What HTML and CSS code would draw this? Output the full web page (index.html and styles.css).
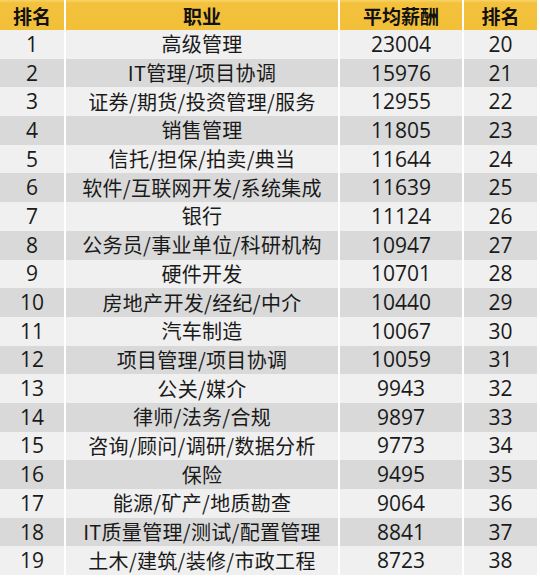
FILE: index.html
```html
<!DOCTYPE html>
<html lang="zh-CN">
<head>
<meta charset="utf-8">
<title>平均薪酬排名</title>
<link rel="stylesheet" href="styles.css">
</head>
<body>
<div class="table">
  <div class="row head"><div class="c">排名</div><div class="c">职业</div><div class="c">平均薪酬</div><div class="c">排名</div></div>
  <div class="row"><div class="c n">1</div><div class="c t">高级管理</div><div class="c n">23004</div><div class="c n">20</div></div>
  <div class="row"><div class="c n">2</div><div class="c t">IT管理/项目协调</div><div class="c n">15976</div><div class="c n">21</div></div>
  <div class="row"><div class="c n">3</div><div class="c t">证券/期货/投资管理/服务</div><div class="c n">12955</div><div class="c n">22</div></div>
  <div class="row"><div class="c n">4</div><div class="c t">销售管理</div><div class="c n">11805</div><div class="c n">23</div></div>
  <div class="row"><div class="c n">5</div><div class="c t">信托/担保/拍卖/典当</div><div class="c n">11644</div><div class="c n">24</div></div>
  <div class="row"><div class="c n">6</div><div class="c t">软件/互联网开发/系统集成</div><div class="c n">11639</div><div class="c n">25</div></div>
  <div class="row"><div class="c n">7</div><div class="c t">银行</div><div class="c n">11124</div><div class="c n">26</div></div>
  <div class="row"><div class="c n">8</div><div class="c t">公务员/事业单位/科研机构</div><div class="c n">10947</div><div class="c n">27</div></div>
  <div class="row"><div class="c n">9</div><div class="c t">硬件开发</div><div class="c n">10701</div><div class="c n">28</div></div>
  <div class="row"><div class="c n">10</div><div class="c t">房地产开发/经纪/中介</div><div class="c n">10440</div><div class="c n">29</div></div>
  <div class="row"><div class="c n">11</div><div class="c t">汽车制造</div><div class="c n">10067</div><div class="c n">30</div></div>
  <div class="row"><div class="c n">12</div><div class="c t">项目管理/项目协调</div><div class="c n">10059</div><div class="c n">31</div></div>
  <div class="row"><div class="c n">13</div><div class="c t">公关/媒介</div><div class="c n">9943</div><div class="c n">32</div></div>
  <div class="row"><div class="c n">14</div><div class="c t">律师/法务/合规</div><div class="c n">9897</div><div class="c n">33</div></div>
  <div class="row"><div class="c n">15</div><div class="c t">咨询/顾问/调研/数据分析</div><div class="c n">9773</div><div class="c n">34</div></div>
  <div class="row"><div class="c n">16</div><div class="c t">保险</div><div class="c n">9495</div><div class="c n">35</div></div>
  <div class="row"><div class="c n">17</div><div class="c t">能源/矿产/地质勘查</div><div class="c n">9064</div><div class="c n">36</div></div>
  <div class="row"><div class="c n">18</div><div class="c t">IT质量管理/测试/配置管理</div><div class="c n">8841</div><div class="c n">37</div></div>
  <div class="row"><div class="c n">19</div><div class="c t">土木/建筑/装修/市政工程</div><div class="c n">8723</div><div class="c n">38</div></div>
</div>
</body>
</html>
```
FILE: styles.css
```css
html, body {
  margin: 0;
  padding: 0;
  background: #ffffff;
}
body {
  font-family: "Open Sans", "Noto Sans CJK SC", sans-serif;
  color: #1a1a1a;
}
.table {
  display: flex;
  flex-direction: column;
  width: 537px;
}
.row {
  display: grid;
  grid-template-columns: 64px 272px 122px 73px;
  column-gap: 2px;
  height: 28.7px;
}
.row .c {
  display: flex;
  align-items: center;
  justify-content: center;
  white-space: nowrap;
  background: #f0f0f0;
  line-height: 1;
}
.row:nth-child(odd) .c {
  background: #d9d9d9;
}
.row.head {
  height: 30px;
}
.row.head .c {
  background: linear-gradient(#f7d468 0, #f3c13c 3px, #f2bf38 100%);
  font-family: "Noto Sans CJK SC", sans-serif;
  font-weight: 700;
  font-size: 19px;
  color: #111;
}
.n {
  font-size: 21px;
}
.t {
  font-family: "Noto Sans CJK SC", sans-serif;
  font-size: 20px;
  letter-spacing: 0.3px;
}
```
